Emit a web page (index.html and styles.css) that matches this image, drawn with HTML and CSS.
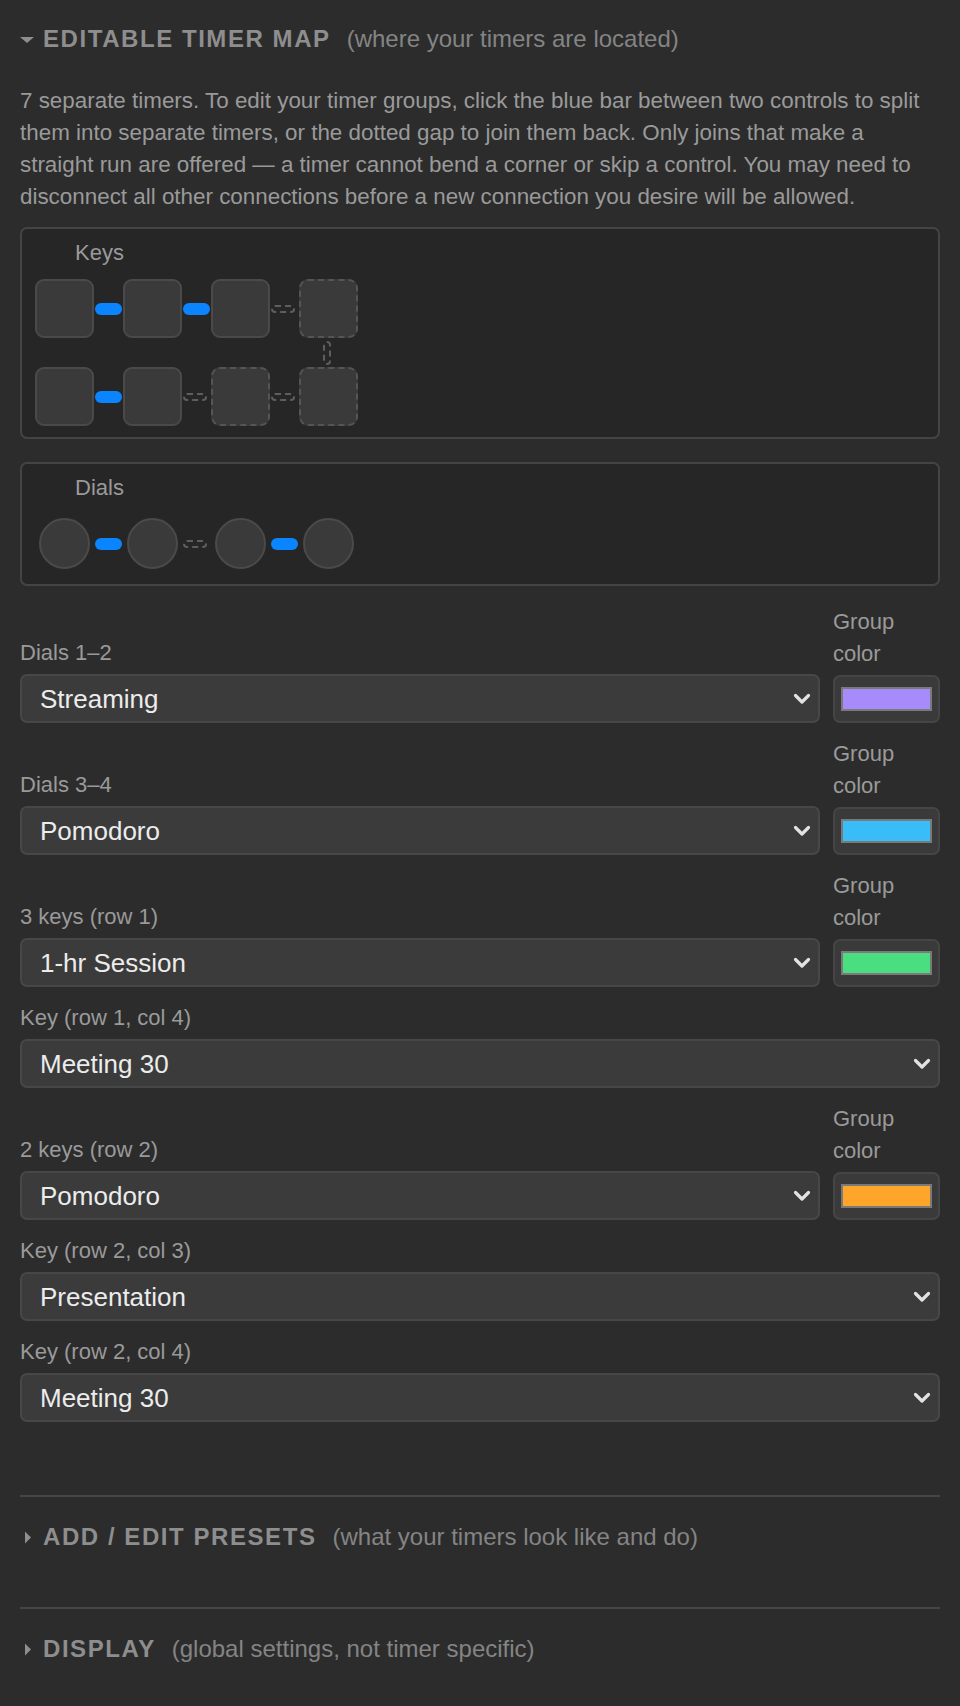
FILE: index.html
```html
<!DOCTYPE html>
<html lang="en">
<head>
    <meta charset="UTF-8">
    <meta name="viewport" content="width=device-width, initial-scale=1.0">
    <title>Timer Settings</title>
    <link rel="stylesheet" href="styles.css">
</head>
<body>
    <div class="settings">
        <details class="section section-open" open>
            <summary>
                <svg class="marker" width="14" height="14" viewBox="0 0 14 14"><polygon points="0,5 14,5 7,11"/></svg>
                <span class="section-title">EDITABLE TIMER MAP</span>
                <span class="section-hint">(where your timers are located)</span>
            </summary>

            <p class="intro">7 separate timers. To edit your timer groups, click the blue bar between two controls to split them into separate timers, or the dotted gap to join them back. Only joins that make a straight run are offered — a timer cannot bend a corner or skip a control. You may need to disconnect all other connections before a new connection you desire will be allowed.</p>

            <div class="map-box">
                <div class="map-label">Keys</div>
                <div class="key-grid">
                    <div class="key"></div>
                    <div class="link"></div>
                    <div class="key"></div>
                    <div class="link"></div>
                    <div class="key"></div>
                    <div class="link-gap"></div>
                    <div class="key key-single"></div>

                    <div class="link-gap link-vertical"></div>

                    <div class="key"></div>
                    <div class="link"></div>
                    <div class="key"></div>
                    <div class="link-gap"></div>
                    <div class="key key-single"></div>
                    <div class="link-gap"></div>
                    <div class="key key-single"></div>
                </div>
            </div>

            <div class="map-box dials-box">
                <div class="map-label">Dials</div>
                <div class="dial-grid">
                    <div class="cell"><div class="dial"></div></div>
                    <div class="link"></div>
                    <div class="cell"><div class="dial"></div></div>
                    <div class="link-gap"></div>
                    <div class="cell"><div class="dial"></div></div>
                    <div class="link"></div>
                    <div class="cell"><div class="dial"></div></div>
                </div>
            </div>

            <div class="timer-form">
                <div class="field-row">
                    <div class="field">
                        <label for="dials-12">Dials 1–2</label>
                        <div class="select-wrap">
                            <select id="dials-12"><option>Streaming</option><option>Pomodoro</option><option>Presentation</option><option>Meeting 30</option><option>1-hr Session</option></select>
                            <svg class="chevron" width="18" height="12" viewBox="0 0 18 12"><path d="M2.5 2.5 L9 9 L15.5 2.5"/></svg>
                        </div>
                    </div>
                    <div class="color-field">
                        <label for="color-dials-12">Group color</label>
                        <input type="color" id="color-dials-12" value="#a78bfa">
                    </div>
                </div>

                <div class="field-row">
                    <div class="field">
                        <label for="dials-34">Dials 3–4</label>
                        <div class="select-wrap">
                            <select id="dials-34"><option>Pomodoro</option><option>Streaming</option><option>Presentation</option><option>Meeting 30</option><option>1-hr Session</option></select>
                            <svg class="chevron" width="18" height="12" viewBox="0 0 18 12"><path d="M2.5 2.5 L9 9 L15.5 2.5"/></svg>
                        </div>
                    </div>
                    <div class="color-field">
                        <label for="color-dials-34">Group color</label>
                        <input type="color" id="color-dials-34" value="#38bdf8">
                    </div>
                </div>

                <div class="field-row">
                    <div class="field">
                        <label for="keys-row1">3 keys (row 1)</label>
                        <div class="select-wrap">
                            <select id="keys-row1"><option>1-hr Session</option><option>Streaming</option><option>Pomodoro</option><option>Presentation</option><option>Meeting 30</option></select>
                            <svg class="chevron" width="18" height="12" viewBox="0 0 18 12"><path d="M2.5 2.5 L9 9 L15.5 2.5"/></svg>
                        </div>
                    </div>
                    <div class="color-field">
                        <label for="color-keys-row1">Group color</label>
                        <input type="color" id="color-keys-row1" value="#4ade80">
                    </div>
                </div>

                <div class="field">
                    <label for="key-r1c4">Key (row 1, col 4)</label>
                    <div class="select-wrap">
                        <select id="key-r1c4"><option>Meeting 30</option><option>Streaming</option><option>Pomodoro</option><option>Presentation</option><option>1-hr Session</option></select>
                        <svg class="chevron" width="18" height="12" viewBox="0 0 18 12"><path d="M2.5 2.5 L9 9 L15.5 2.5"/></svg>
                    </div>
                </div>

                <div class="field-row">
                    <div class="field">
                        <label for="keys-row2">2 keys (row 2)</label>
                        <div class="select-wrap">
                            <select id="keys-row2"><option>Pomodoro</option><option>Streaming</option><option>Presentation</option><option>Meeting 30</option><option>1-hr Session</option></select>
                            <svg class="chevron" width="18" height="12" viewBox="0 0 18 12"><path d="M2.5 2.5 L9 9 L15.5 2.5"/></svg>
                        </div>
                    </div>
                    <div class="color-field">
                        <label for="color-keys-row2">Group color</label>
                        <input type="color" id="color-keys-row2" value="#ffa62a">
                    </div>
                </div>

                <div class="field">
                    <label for="key-r2c3">Key (row 2, col 3)</label>
                    <div class="select-wrap">
                        <select id="key-r2c3"><option>Presentation</option><option>Streaming</option><option>Pomodoro</option><option>Meeting 30</option><option>1-hr Session</option></select>
                        <svg class="chevron" width="18" height="12" viewBox="0 0 18 12"><path d="M2.5 2.5 L9 9 L15.5 2.5"/></svg>
                    </div>
                </div>

                <div class="field">
                    <label for="key-r2c4">Key (row 2, col 4)</label>
                    <div class="select-wrap">
                        <select id="key-r2c4"><option>Meeting 30</option><option>Streaming</option><option>Pomodoro</option><option>Presentation</option><option>1-hr Session</option></select>
                        <svg class="chevron" width="18" height="12" viewBox="0 0 18 12"><path d="M2.5 2.5 L9 9 L15.5 2.5"/></svg>
                    </div>
                </div>
            </div>
        </details>

        <details class="section">
            <summary>
                <svg class="marker" width="14" height="14" viewBox="0 0 14 14"><polygon points="5,1.5 11,7.5 5,13.5"/></svg>
                <span class="section-title">ADD / EDIT PRESETS</span>
                <span class="section-hint">(what your timers look like and do)</span>
            </summary>
        </details>

        <details class="section">
            <summary>
                <svg class="marker" width="14" height="14" viewBox="0 0 14 14"><polygon points="5,1.5 11,7.5 5,13.5"/></svg>
                <span class="section-title">DISPLAY</span>
                <span class="section-hint">(global settings, not timer specific)</span>
            </summary>
        </details>
    </div>
</body>
</html>
```

FILE: styles.css
```css
body {
    font-family: "Liberation Sans", Arial, Helvetica, sans-serif;
    background-color: #2c2c2c;
    color: #9a9a9a;
    margin: 0;
    padding: 0 20px;
    font-size: 22px;
    line-height: 32px;
}

.settings {
    width: 920px;
}

.section {
    padding: 24px 0 54px;
}

.section + .section {
    border-top: 2px solid #464646;
}

.section-open {
    padding-top: 23px;
    padding-bottom: 73px;
}

summary {
    list-style: none;
    display: flex;
    align-items: center;
    height: 32px;
    cursor: pointer;
}

summary::-webkit-details-marker {
    display: none;
}

.marker {
    fill: #8e8e8e;
    margin-right: 9px;
    flex-shrink: 0;
}

.section-title {
    font-size: 24px;
    font-weight: bold;
    letter-spacing: 0.065em;
    color: #8e8e8e;
}

.section-hint {
    font-size: 24px;
    color: #848484;
    margin-left: 16px;
}

.intro {
    font-size: 22.4px;
    margin: 30px 0 14px;
}

.map-box {
    background-color: #262626;
    border: 2px solid #444;
    border-radius: 7px;
    padding: 8px 13px 11px;
}

.dials-box {
    margin-top: 23px;
}

.map-label {
    padding-left: 40px;
    margin-bottom: 10px;
}

.key-grid,
.dial-grid {
    display: grid;
    grid-template-columns: 59px 29px 59px 29px 59px 29px 59px;
}

.key-grid {
    grid-template-rows: 59px 29px 59px;
}

.dial-grid {
    grid-template-rows: 59px;
}

.key {
    box-sizing: border-box;
    background-color: #3a3a3a;
    border: 2px solid #4a4a4a;
    border-radius: 9px;
}

.key-single {
    border: 2px dashed #555;
}

.cell {
    display: flex;
    align-items: center;
    justify-content: center;
}

.dial {
    box-sizing: border-box;
    width: 51px;
    height: 51px;
    border-radius: 50%;
    background-color: #3a3a3a;
    border: 2px solid #4a4a4a;
}

.link {
    width: 27px;
    height: 12px;
    border-radius: 6px;
    background-color: #0a84ff;
    align-self: center;
    justify-self: center;
}

.link-gap {
    box-sizing: border-box;
    width: 24px;
    height: 8px;
    border: 2px dashed #5e5e5e;
    border-radius: 4px;
    align-self: center;
    justify-self: start;
    margin-left: 1px;
}

.link-vertical {
    grid-column: 7;
    width: 8px;
    height: 24px;
    justify-self: center;
    margin-left: 0;
    margin-right: 3px;
}

.timer-form {
    margin-top: 20px;
    display: flex;
    flex-direction: column;
    gap: 15px;
}

.field-row {
    display: flex;
    align-items: flex-end;
    gap: 13px;
}

.field {
    flex-grow: 1;
}

label {
    display: block;
    margin-bottom: 5px;
}

.select-wrap {
    position: relative;
}

select {
    -webkit-appearance: none;
    appearance: none;
    display: block;
    box-sizing: border-box;
    width: 100%;
    height: 49px;
    padding: 0 48px 0 18px;
    font-family: inherit;
    font-size: 26px;
    color: #ececec;
    background-color: #3b3b3b;
    border: 2px solid #474747;
    border-radius: 7px;
    outline: none;
}

.chevron {
    position: absolute;
    right: 9px;
    top: 50%;
    transform: translateY(-50%);
    fill: none;
    stroke: #e2e2e2;
    stroke-width: 3.2;
    stroke-linecap: round;
    stroke-linejoin: round;
    pointer-events: none;
}

.color-field {
    width: 107px;
    flex-shrink: 0;
}

input[type="color"] {
    -webkit-appearance: none;
    appearance: none;
    display: block;
    box-sizing: border-box;
    width: 107px;
    height: 48px;
    padding: 10px 6px;
    background-color: #3a3a3a;
    border: 2px solid #454545;
    border-radius: 7px;
    cursor: pointer;
}

input[type="color"]::-webkit-color-swatch-wrapper {
    padding: 0;
}

input[type="color"]::-webkit-color-swatch {
    border: 2px solid #7a7a7a;
    border-radius: 0;
}
```
